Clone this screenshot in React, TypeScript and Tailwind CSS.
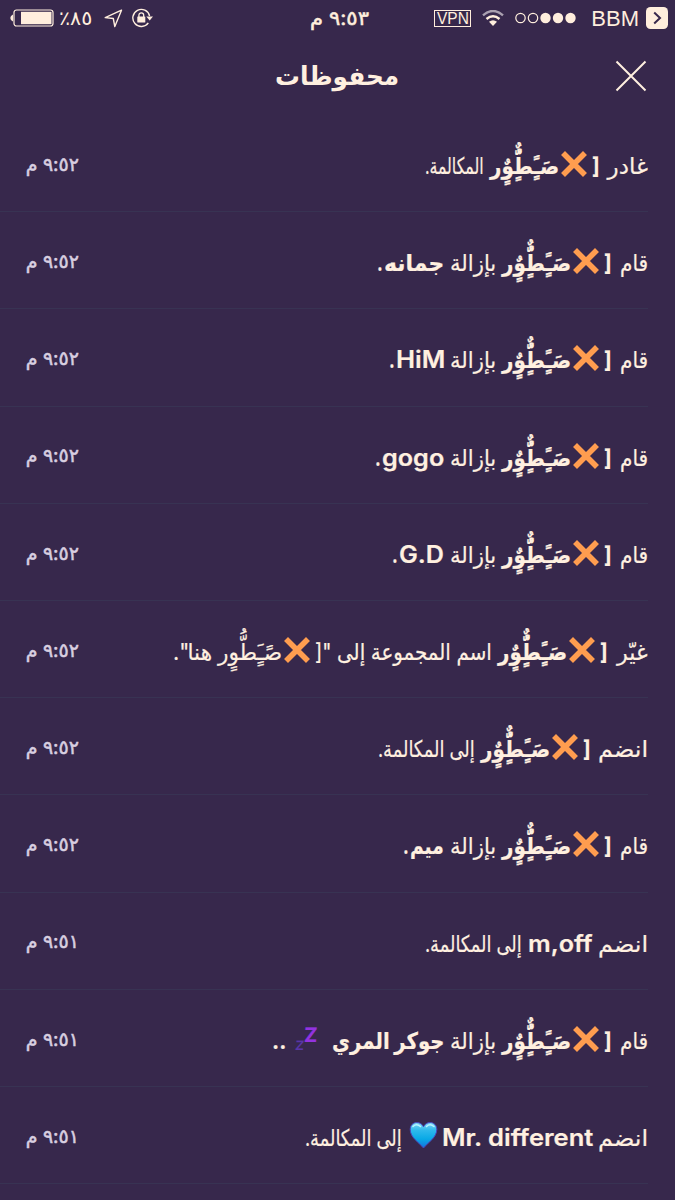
import * as React from "react";
import clsx from "clsx";

type Run =
  | { kind: "text"; text: string; width: number; gap?: number; className?: string }
  | { kind: "cross" | "heart" | "sleep"; gap?: number };

interface Message {
  time: string;
  runs: Run[];
}

const NAME = "صَـًٍطٌٍُّوٌٍر";
const PM_52 = "٩:٥٢ م";
const PM_51 = "٩:٥١ م";

const t = (text: string, width: number, gap = 6): Run => ({ kind: "text", text, width, gap });
const b = (text: string, width: number, gap = 6): Run => ({ kind: "text", text, width, gap, className: "font-bold" });
const latin = (text: string, width: number, gap = 6): Run => ({
  kind: "text",
  text,
  width,
  gap,
  className: "font-[Inter] text-[24px] font-semibold",
});

// "[ ✖ name", shown bold inside most of the messages
const user = (gap = 8): Run[] => [b("[", 8, gap), { kind: "cross", gap: 5 }, b(NAME, 69, 2)];

const messages: Message[] = [
  { time: PM_52, runs: [t("غادر", 40, 0), ...user(), t("المكالمة.", 59)] },
  { time: PM_52, runs: [t("قام", 28, 0), ...user(), t("بإزالة", 46), b("جمانه", 60), b(".", 6, 1)] },
  { time: PM_52, runs: [t("قام", 28, 0), ...user(), t("بإزالة", 46), latin("HiM", 49, 5), b(".", 6, 1)] },
  { time: PM_52, runs: [t("قام", 28, 0), ...user(), t("بإزالة", 46), latin("gogo", 62), b(".", 6, 1)] },
  { time: PM_52, runs: [t("قام", 28, 0), ...user(), t("بإزالة", 46), latin("G.D", 45), b(".", 6, 1)] },
  {
    time: PM_52,
    runs: [
      t("غيّر", 31, 0),
      ...user(9),
      t("اسم المجموعة إلى \"[", 177),
      { kind: "cross", gap: 5 },
      t("صًـٍَطُّوٍر هنا\".", 109, 2),
    ],
  },
  { time: PM_52, runs: [t("انضم", 50, 0), ...user(7), t("إلى المكالمة.", 97)] },
  { time: PM_52, runs: [t("قام", 28, 0), ...user(), t("بإزالة", 46), b("ميم", 34), b(".", 6, 1)] },
  { time: PM_51, runs: [t("انضم", 50, 0), latin("m,off", 65, 5), t("إلى المكالمة.", 97)] },
  {
    time: PM_51,
    runs: [t("قام", 28, 0), ...user(), t("بإزالة", 46), b("جوكر المري", 112), { kind: "sleep", gap: 16 }, b("..", 14, 9)],
  },
  {
    time: PM_51,
    runs: [t("انضم", 50, 0), latin("Mr. different", 151, 5), { kind: "heart", gap: 4 }, t("إلى المكالمة.", 97, 7)],
  },
];

/** Condenses or expands a line of text to the given width. */
const FitText = ({ text, width, className }: { text: string; width: number; className?: string }) => {
  const ref = React.useRef<HTMLSpanElement>(null);
  const [scale, setScale] = React.useState(1);

  React.useLayoutEffect(() => {
    if (ref.current) setScale(width / ref.current.offsetWidth);
  }, [text, width]);

  return (
    <span dir="rtl" className="inline-block shrink-0 whitespace-nowrap" style={{ width }}>
      <span
        ref={ref}
        className={clsx("inline-block origin-right", className)}
        style={{ transform: `scaleX(${scale})` }}
      >
        {text}
      </span>
    </span>
  );
};

const Cross = () => (
  <svg width="26" height="26" viewBox="0 0 26 26" className="-mb-[3px] block">
    <path d="M4 4 22 22M22 4 4 22" stroke="#ff9d4f" strokeWidth="5.600" strokeLinecap="square" />
  </svg>
);

const Heart = () => (
  <svg width="29" height="28" viewBox="0 0 29 28" className="-mb-[3px] block">
    <defs>
      <linearGradient id="heart" x1="0" y1="0" x2="0" y2="1">
        <stop offset="0" stopColor="#7fd8f5" />
        <stop offset="0.3" stopColor="#2fb9ec" />
        <stop offset="0.65" stopColor="#08a9e6" />
        <stop offset="1" stopColor="#1672dc" />
      </linearGradient>
    </defs>
    <path
      d="M14.5 27C10 21.500 1.200 16.500 1.200 8.500 1.200 4.200 4.200 1.500 7.800 1.500 10.900 1.500 13.400 3.300 14.500 5.800 15.600 3.300 18.100 1.500 21.200 1.500 24.800 1.500 27.800 4.200 27.800 8.500 27.800 16.500 19 21.500 14.500 27Z"
      fill="url(#heart)"
      stroke="#4a45bd"
      strokeWidth="1"
    />
    <path d="M4 5.500Q7.500 2 11.500 5.500M17.500 5.500Q21 2 25 5.500" fill="none" stroke="#b9f3ff" strokeWidth="1.600" strokeLinecap="round" />
  </svg>
);

const Sleep = () => (
  <span dir="ltr" className="flex w-[21px] items-baseline leading-none">
    <span className="relative top-[1px] -skew-x-6 text-[17px] text-[#5a36a8]">z</span>
    <span className="relative -top-[7px] -skew-x-3 text-[20px] font-bold text-[#9333e0]">Z</span>
  </span>
);

const RunView = ({ run }: { run: Run }) => (
  <span className="shrink-0" style={{ marginRight: run.gap ?? 0 }}>
    {run.kind === "text" && <FitText text={run.text} width={run.width} className={run.className} />}
    {run.kind === "cross" && <Cross />}
    {run.kind === "heart" && <Heart />}
    {run.kind === "sleep" && <Sleep />}
  </span>
);

const StatusBar = () => (
  <div dir="ltr" className="flex h-[36px] items-center text-[#ffeedd]">
    <div className="flex w-[300px] items-center pl-[10px]">
      <svg width="44" height="18" viewBox="0 0 44 18" fill="none">
        <path d="M3 5.500Q.3 6.500 .3 9T3 12.500Z" fill="currentColor" />
        <rect x="4" y="1" width="39" height="16" rx="2.500" stroke="currentColor" strokeWidth="1.200" />
        <rect x="11" y="2.800" width="30.500" height="12.400" fill="currentColor" />
      </svg>
      <span className="ml-[5px] text-[20px]">
        <FitText text="٨٥٪" width={33} />
      </span>
      <svg width="19" height="19" viewBox="0 0 19 19" fill="none" className="ml-[12px]">
        <path d="M17.500 1.200 1.200 8.600 9.300 9.500 10.800 17.600Z" stroke="currentColor" strokeWidth="1.400" strokeLinejoin="round" />
      </svg>
      <svg width="21" height="20" viewBox="0 0 21 20" fill="none" className="ml-[9px]">
        <path d="M16.300 14.800A8.500 8.500 0 1 1 17.600 8" stroke="currentColor" strokeWidth="1.400" />
        <path d="M14.300 8.500H21L17.700 12.500Z" fill="currentColor" />
        <rect x="5.300" y="8.500" width="8" height="6" rx=".6" fill="currentColor" />
        <path d="M6.900 9V7.200a2.400 2.400 0 0 1 4.800 0V9" stroke="currentColor" strokeWidth="1.300" />
      </svg>
    </div>
    <div className="pl-[10px] text-[20px] [-webkit-text-stroke:0.500px]">
      <FitText text="٩:٥٣ م" width={59} />
    </div>
    <div className="ml-auto flex shrink-0 items-center pr-[7px]">
      <span className="flex h-[17px] w-[37px] items-center justify-center border border-[#ffeedd] pt-[2px] font-['Liberation_Sans'] text-[16px] leading-none">
        <FitText text="VPN" width={32} />
      </span>
      <svg width="22" height="17" viewBox="0 0 22 17" fill="none" className="ml-[11px]">
        <path d="M1 5.300Q11-3.300 21 5.300" stroke="#aaa0b0" strokeWidth="2.400" />
        <path d="M4.500 9Q11 3.600 17.500 9" stroke="currentColor" strokeWidth="2.500" />
        <path d="M7 11.800Q11 8.500 15 11.800L11 16Z" fill="currentColor" />
      </svg>
      <svg width="62" height="12" viewBox="0 0 62 12" className="ml-[11px]">
        <circle cx="5.500" cy="6" r="4.700" fill="none" stroke="currentColor" strokeWidth="1.200" />
        <circle cx="18" cy="6" r="4.700" fill="none" stroke="currentColor" strokeWidth="1.200" />
        <circle cx="30.500" cy="6" r="5.200" fill="currentColor" />
        <circle cx="43" cy="6" r="5.200" fill="currentColor" />
        <circle cx="55.500" cy="6" r="5.200" fill="currentColor" />
      </svg>
      <span className="ml-[14px] font-['Liberation_Sans'] text-[22px]">
        <FitText text="BBM" width={48} />
      </span>
      <svg width="22" height="22" viewBox="0 0 22 22" fill="none" className="ml-[7px]">
        <rect width="22" height="22" rx="4.500" fill="currentColor" />
        <path d="M8.200 5.500 14 11 8.200 16.500" stroke="#38284c" strokeWidth="2" />
      </svg>
    </div>
  </div>
);

const Header = () => (
  <header className="grid h-[79px] grid-cols-3 items-center text-[#fff0e0]">
    <svg width="32" height="32" viewBox="0 0 32 32" className="mr-[28px]">
      <path d="M1.500 1.500 30.500 30.500M30.500 1.500 1.500 30.500" stroke="currentColor" strokeWidth="2" />
    </svg>
    <h1 className="flex justify-center text-[26px] font-bold">
      <FitText text="محفوظات" width={124} />
    </h1>
  </header>
);

const MessageRow = ({ message }: { message: Message }) => (
  <li className="mr-[27px] flex h-[97.200px] shrink-0 items-center justify-between border-b border-[#383353] pl-[26px]">
    <div className="flex items-baseline pt-[6px] text-[23px] leading-[36px] text-[#fff0e0] [-webkit-text-stroke:0.200px]">
      {message.runs.map((run, i) => (
        <RunView key={i} run={run} />
      ))}
    </div>
    <time className="pt-[4px] text-[19px] text-[#d8cfe0] [-webkit-text-stroke:0.500px]">
      <FitText text={message.time} width={53} />
    </time>
  </li>
);

export default function App() {
  return (
    <main
      dir="rtl"
      className="flex h-[1200px] w-[675px] flex-col overflow-hidden bg-[#37284c] font-[Inter,'DejaVu_Sans',sans-serif]"
    >
      <StatusBar />
      <Header />
      <ul className="flex flex-col">
        {messages.map((message, i) => (
          <MessageRow key={i} message={message} />
        ))}
      </ul>
    </main>
  );
}
